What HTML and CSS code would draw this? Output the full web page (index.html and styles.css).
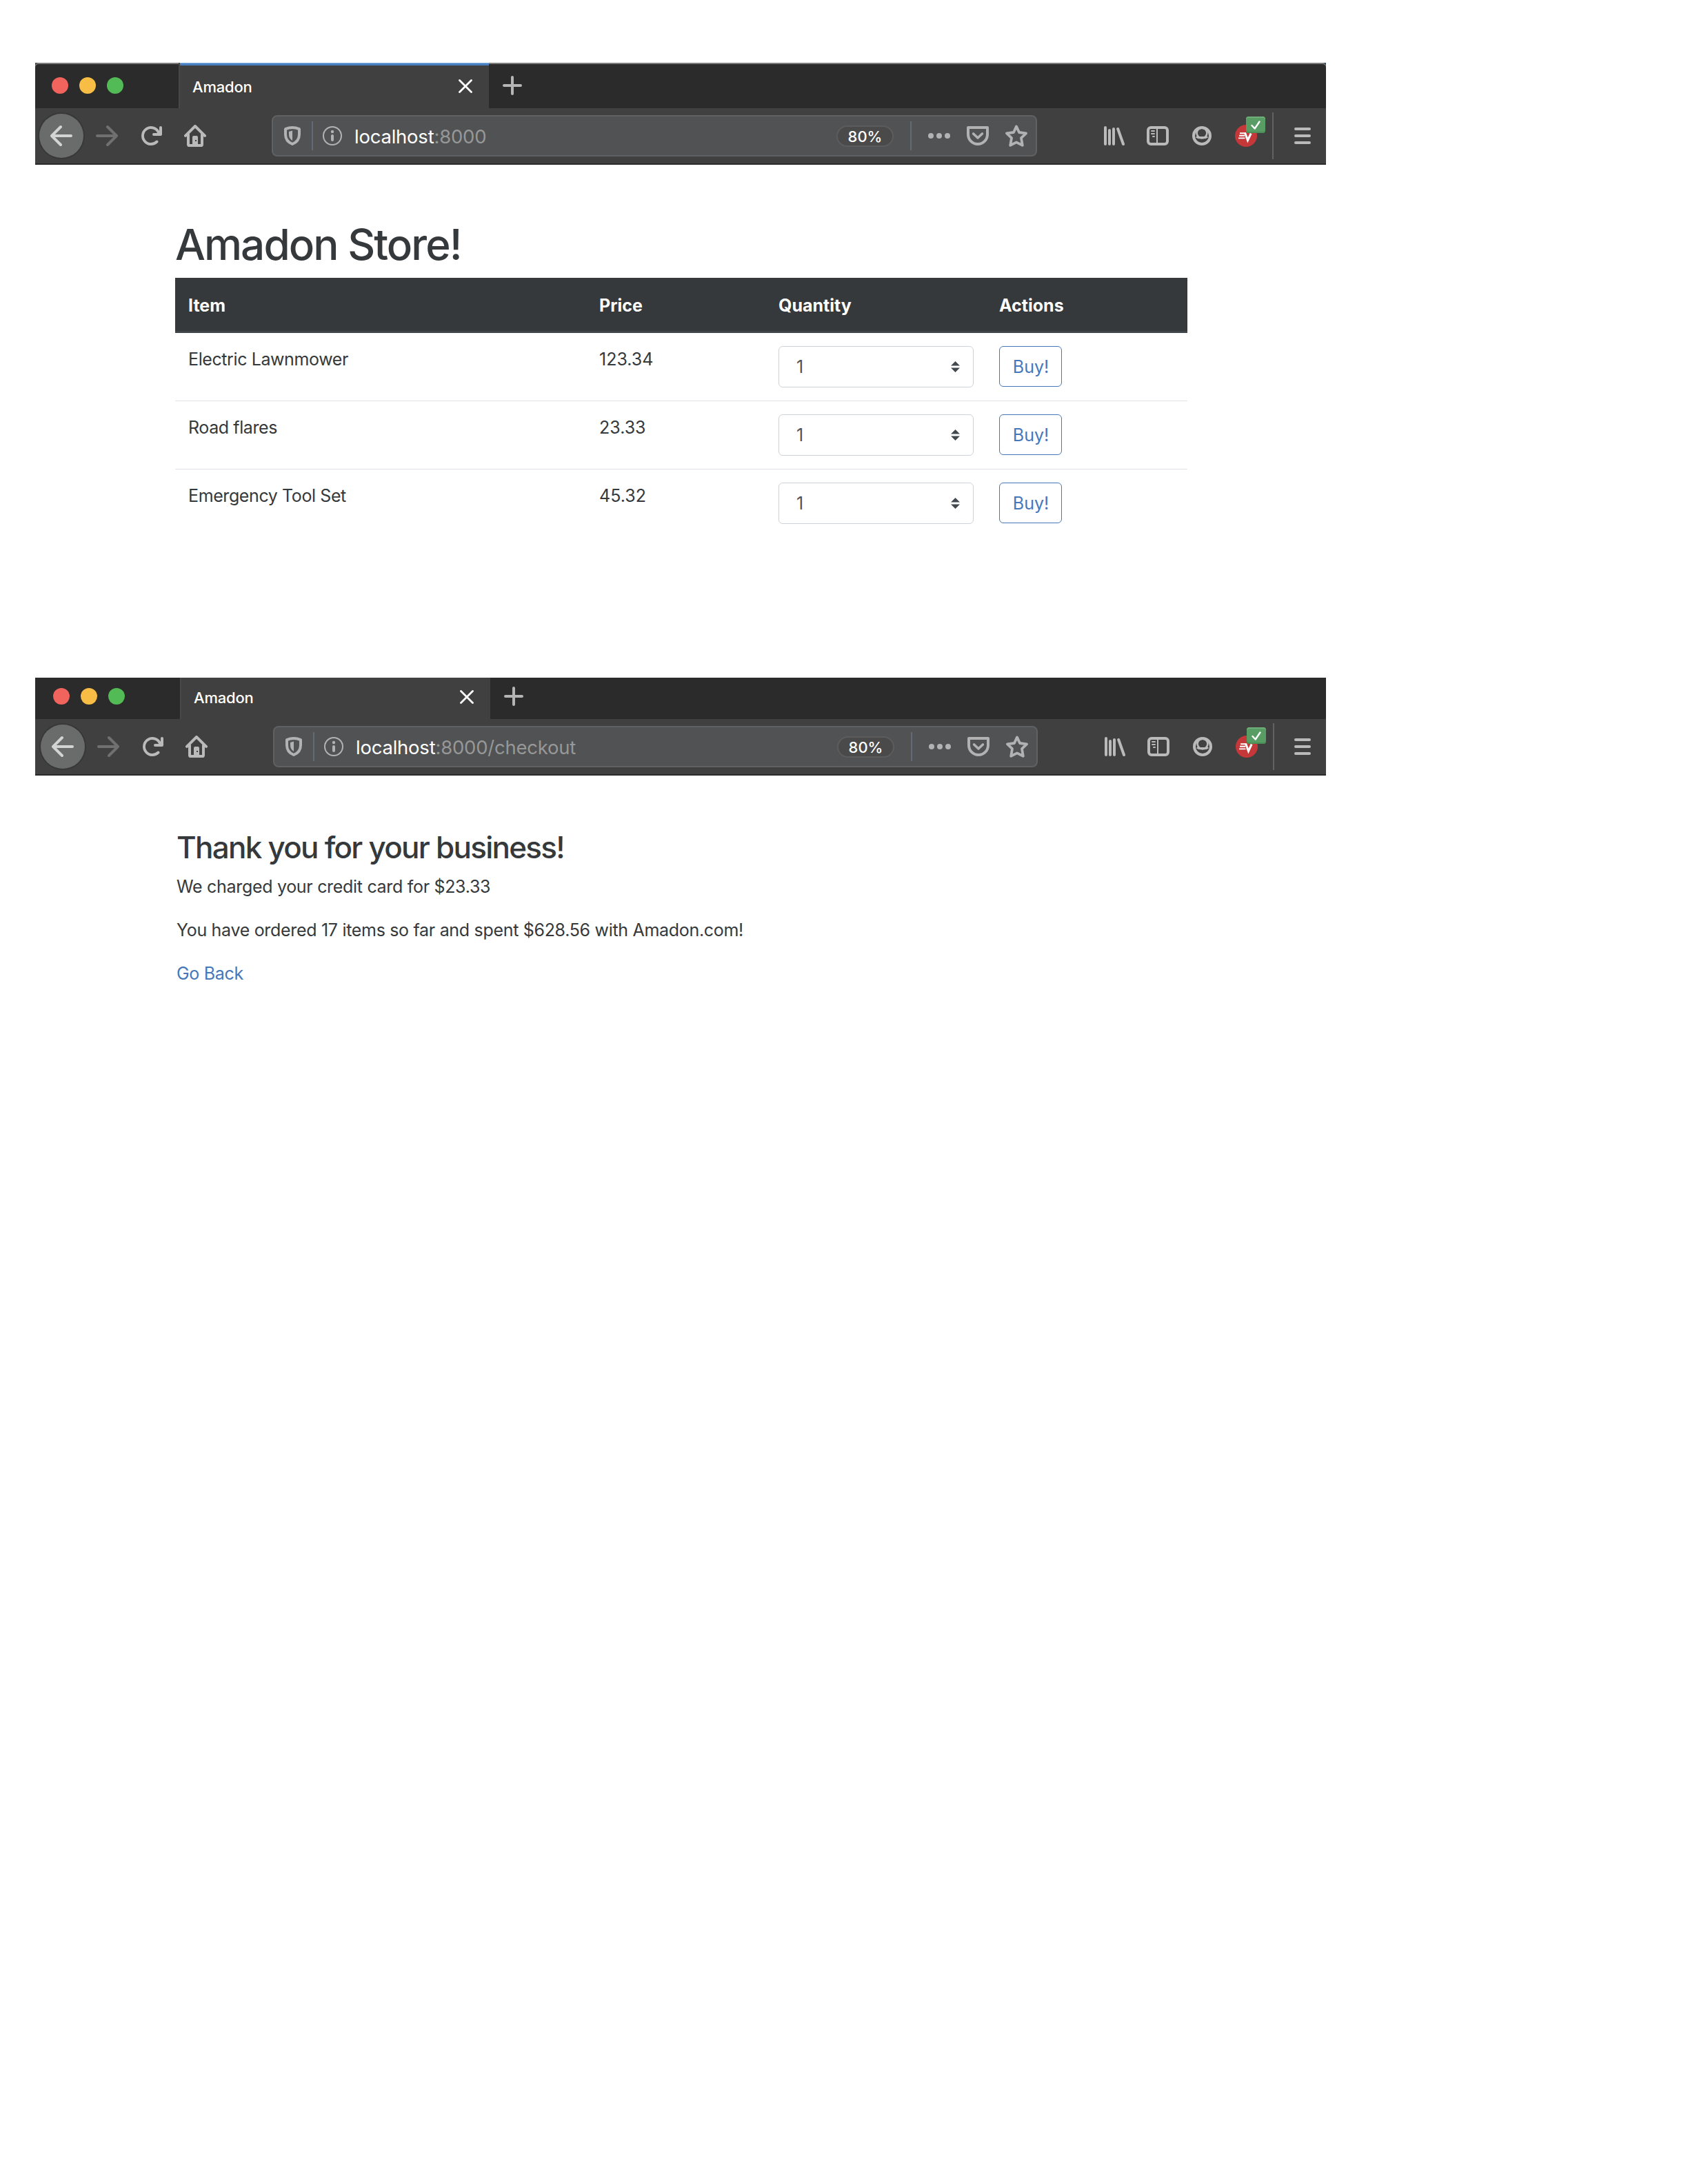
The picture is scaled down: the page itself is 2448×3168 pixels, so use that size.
FILE: index.html
```html
<!DOCTYPE html>
<html lang="en">
<head>
<meta charset="utf-8">
<title>Amadon</title>
<link rel="stylesheet" href="styles.css">
</head>
<body>
<svg width="0" height="0" class="sprite" aria-hidden="true">
  <symbol id="back" viewBox="0 0 16 16"><path d="M15 7H3.414l4.793-4.793a1 1 0 0 0-1.414-1.414l-6.5 6.5a1 1 0 0 0 0 1.414l6.5 6.5a1 1 0 0 0 1.414-1.414L3.414 9H15a1 1 0 0 0 0-2z" fill="currentColor"/></symbol>
  <symbol id="reload" viewBox="0 0 16 16"><path d="M15 1a1 1 0 0 0-1 1v2.418A6.995 6.995 0 1 0 8 15a6.954 6.954 0 0 0 4.95-2.05 1 1 0 0 0-1.414-1.414A5.019 5.019 0 1 1 12.549 6H10a1 1 0 0 0 0 2h5a1 1 0 0 0 1-1V2a1 1 0 0 0-1-1z" fill="currentColor"/></symbol>
  <symbol id="home" viewBox="0 0 16 16"><path d="M1 7.9 8 1l7 6.9M3 7v7.2q0 .8.8.8h8.4q.8 0 .8-.8V7" fill="none" stroke="currentColor" stroke-width="2" stroke-linecap="round" stroke-linejoin="round"/><path fill-rule="evenodd" d="M6 15V9q0-1 1-1h2q1 0 1 1v6zM8 11v1h1v-1z" fill="currentColor"/></symbol>
  <symbol id="shield" viewBox="0 0 16 16"><path d="M3 3.1Q8 1 13 3.1V7q0 5-5 7Q3 12 3 7z" fill="none" stroke="currentColor" stroke-width="2" stroke-linejoin="round"/><path d="M5.5 5 8 4.3v7.2Q5.5 10 5.5 7z" fill="currentColor"/></symbol>
  <symbol id="info" viewBox="0 0 16 16"><circle cx="8" cy="8" r="6.5" fill="none" stroke="currentColor"/><circle cx="8" cy="5" r="1.1" fill="currentColor"/><rect x="7" y="7" width="2" height="5" rx="1" fill="currentColor"/></symbol>
  <symbol id="dots" viewBox="0 0 16 16"><g fill="currentColor"><circle cx="2" cy="8" r="2"/><circle cx="8" cy="8" r="2"/><circle cx="14" cy="8" r="2"/></g></symbol>
  <symbol id="pocket" viewBox="0 0 16 16"><g fill="none" stroke="currentColor" stroke-width="2" stroke-linejoin="round" stroke-linecap="round"><path d="M1 2h14v5a7 7 0 0 1-14 0z"/><path d="m4.8 6.5 3.2 3 3.2-3" stroke-width="1.8"/></g></symbol>
  <symbol id="star" viewBox="0 0 16 16"><path d="m8 1.2 2 4.3 5 .7-3.5 3.4.9 5.3L8 12.7l-4.4 2.2.9-5.3L1 6.2l5-.7z" fill="none" stroke="currentColor" stroke-width="1.9" stroke-linejoin="round"/></symbol>
  <symbol id="library" viewBox="0 0 16 16"><path d="M2 2v12M5 4v10M8 3v11M11.1 3l3.9 11" fill="none" stroke="currentColor" stroke-width="2" stroke-linecap="round"/></symbol>
  <symbol id="sidebar" viewBox="0 0 16 16"><rect x="1" y="2" width="14" height="12" rx="2" fill="none" stroke="currentColor" stroke-width="2"/><path d="M7.5 2v12" stroke="currentColor"/><path d="M3.5 4.5h2M3.5 6.5h2M4.5 8.5h1" stroke="currentColor" stroke-width="1" stroke-linecap="round"/></symbol>
  <symbol id="account" viewBox="0 0 16 16"><circle cx="8" cy="8" r="6" fill="none" stroke="currentColor" stroke-width="2"/><path d="M4 8.600q1.200 1 2 .6h4q.8.4 2-.6" fill="none" stroke="currentColor" stroke-width="1.500"/><circle cx="8" cy="6" r="3.700" fill="none" stroke="currentColor" stroke-width="1.300"/></symbol>
  <symbol id="vpn" viewBox="0 0 32 32"><circle cx="16" cy="16" r="16" fill="#c4383a"/><path d="M7 12.200h8.500M6 15.800h8M5 19.400h9.500" fill="none" stroke="#fff" stroke-width="1.900"/><path d="M14.500 11.500 18.500 22.500 23.200 12.500" fill="none" stroke="#fff" stroke-width="3"/></symbol>
  <symbol id="menu" viewBox="0 0 16 16"><path d="M3 3h10M3 8h10M3 13h10" fill="none" stroke="currentColor" stroke-width="2" stroke-linecap="round"/></symbol>
  <symbol id="close" viewBox="0 0 20 20"><path d="m1.500 1.500 17 17m0-17-17 17" stroke="currentColor" stroke-width="2.800" stroke-linecap="round"/></symbol>
  <symbol id="plus" viewBox="0 0 28 28"><path d="M14 2v24M2 14h24" stroke="currentColor" stroke-width="4" stroke-linecap="round"/></symbol>
  <symbol id="updown" viewBox="0 0 13 16"><path d="M0 6.500 6.500 0 13 6.500zM0 9.500h13L6.500 16z" fill="#42484e"/></symbol>
  <symbol id="check" viewBox="0 0 28 24"><path d="m8.500 13 4.200 4.500L19.500 7.500" fill="none" stroke="#fff" stroke-width="2.400" stroke-linecap="round" stroke-linejoin="round"/></symbol>
</svg>

<section class="window store-window">
  <header class="tabstrip">
    <div class="lights"><i class="red"></i><i class="yellow"></i><i class="green"></i></div>
    <div class="tab"><span class="tab-title">Amadon</span><svg class="close"><use href="#close"/></svg></div>
    <svg class="plus"><use href="#plus"/></svg>
  </header>
  <nav class="toolbar">
    <span class="back"><svg class="icon"><use href="#back"/></svg></span>
    <svg class="icon forward"><use href="#back"/></svg>
    <svg class="icon reload"><use href="#reload"/></svg>
    <svg class="icon home"><use href="#home"/></svg>
    <div class="urlbar">
      <svg class="icon"><use href="#shield"/></svg><i class="rule"></i><svg class="icon"><use href="#info"/></svg>
      <span class="url"><b>localhost</b>:8000</span>
      <span class="zoom">80%</span><i class="rule"></i>
      <svg class="icon dots"><use href="#dots"/></svg><svg class="icon"><use href="#pocket"/></svg><svg class="icon"><use href="#star"/></svg>
    </div>
    <div class="tools">
      <svg class="icon"><use href="#library"/></svg><svg class="icon"><use href="#sidebar"/></svg><svg class="icon"><use href="#account"/></svg>
      <span class="ext"><svg class="icon"><use href="#vpn"/></svg><svg class="badge"><use href="#check"/></svg></span>
    </div>
    <i class="divider"></i>
    <svg class="icon menu"><use href="#menu"/></svg>
  </nav>
</section>

<main class="store">
  <h1>Amadon Store!</h1>
  <table>
    <thead><tr><th class="c-item">Item</th><th class="c-price">Price</th><th class="c-qty">Quantity</th><th>Actions</th></tr></thead>
    <tbody>
      <tr><td class="name">Electric Lawnmower</td><td>123.34</td><td><div class="select">1<svg><use href="#updown"/></svg></div></td><td><button>Buy!</button></td></tr>
      <tr><td class="name">Road flares</td><td>23.33</td><td><div class="select">1<svg><use href="#updown"/></svg></div></td><td><button>Buy!</button></td></tr>
      <tr><td class="name">Emergency Tool Set</td><td>45.32</td><td><div class="select">1<svg><use href="#updown"/></svg></div></td><td><button>Buy!</button></td></tr>
    </tbody>
  </table>
</main>

<section class="window checkout-window">
  <header class="tabstrip">
    <div class="lights"><i class="red"></i><i class="yellow"></i><i class="green"></i></div>
    <div class="tab"><span class="tab-title">Amadon</span><svg class="close"><use href="#close"/></svg></div>
    <svg class="plus"><use href="#plus"/></svg>
  </header>
  <nav class="toolbar">
    <span class="back"><svg class="icon"><use href="#back"/></svg></span>
    <svg class="icon forward"><use href="#back"/></svg>
    <svg class="icon reload"><use href="#reload"/></svg>
    <svg class="icon home"><use href="#home"/></svg>
    <div class="urlbar">
      <svg class="icon"><use href="#shield"/></svg><i class="rule"></i><svg class="icon"><use href="#info"/></svg>
      <span class="url"><b>localhost</b>:8000/checkout</span>
      <span class="zoom">80%</span><i class="rule"></i>
      <svg class="icon dots"><use href="#dots"/></svg><svg class="icon"><use href="#pocket"/></svg><svg class="icon"><use href="#star"/></svg>
    </div>
    <div class="tools">
      <svg class="icon"><use href="#library"/></svg><svg class="icon"><use href="#sidebar"/></svg><svg class="icon"><use href="#account"/></svg>
      <span class="ext"><svg class="icon"><use href="#vpn"/></svg><svg class="badge"><use href="#check"/></svg></span>
    </div>
    <i class="divider"></i>
    <svg class="icon menu"><use href="#menu"/></svg>
  </nav>
</section>

<main class="checkout">
  <h3>Thank you for your business!</h3>
  <p>We charged your credit card for $23.33</p>
  <p>You have ordered 17 items so far and spent $628.56 with Amadon.com!</p>
  <p><a href="#">Go Back</a></p>
</main>
</body>
</html>
```
FILE: styles.css
```css
* { box-sizing: border-box; }
body {
  margin: 0;
  padding: 91px 0 0 51px;
  background: #fff;
  color: #35393c;
  font-family: Inter, "Liberation Sans", sans-serif;
  font-size: 25px;
  line-height: 38px;
}
.sprite { position: absolute; }
svg { display: block; flex: none; }

.window {
  --shift: 0px;
  width: 1872px;
  background: #404040;
  border-bottom: 2px solid #2b2b2b;
}
.checkout-window { --shift: 2px; }

.tabstrip {
  display: flex;
  align-items: center;
  height: 66px;
  background: #2b2b2b;
}
.store-window { background: #34465c; }
.store-window .tabstrip {
  border-radius: 5px 5px 0 0;
  box-shadow: inset 0 2px #7c7c7c;
}
.checkout-window .tabstrip { height: 60px; }
.lights {
  display: flex;
  gap: 16px;
  width: calc(208px + var(--shift));
  padding-left: calc(24px + var(--shift));
}
.lights i { width: 24px; height: 24px; border-radius: 50%; }
.red { background: #f1645d; }
.yellow { background: #f7bd45; }
.green { background: #53bb56; }
.tab {
  display: flex;
  align-items: center;
  justify-content: space-between;
  width: 450px;
  height: 100%;
  padding: 2px 24px 0 18px;
  background: #404040;
  border-left: 2px solid #484848;
}
.store-window .tab { box-shadow: inset 0 1px #85b3e0, inset 0 4px #4a7fc1; }
.tab-title {
  padding-top: 2px;
  color: #fff;
  font-size: 22px;
  font-weight: 500;
  letter-spacing: -0.2px;
}
.close { width: 20px; height: 20px; color: #fff; }
.plus { width: 28px; height: 28px; margin-left: 20px; color: #b5b5b5; }
.checkout-window .lights, .checkout-window .plus { margin-bottom: 6px; }
.checkout-window .tab { padding-bottom: 4px; padding-top: 0; }

.toolbar {
  display: flex;
  align-items: center;
  height: 80px;
  padding-left: calc(6px + var(--shift));
  background: #404040;
  color: #bababa;
}
.icon { width: 32px; height: 32px; }
.back {
  display: flex;
  align-items: center;
  justify-content: center;
  width: 64px;
  height: 64px;
  border-radius: 50%;
  background: #6a6c6b;
  box-shadow: 0 0 0 2px #383838;
  color: #d2d4d3;
}
.forward { margin-left: 18px; color: #707070; transform: scaleX(-1); }
.reload, .home { margin-left: 32px; }
.urlbar {
  display: flex;
  align-items: center;
  width: calc(1110px - var(--shift) / 2);
  height: 60px;
  margin-left: 95px;
  padding: 0 12px;
  border: 2px solid #606163;
  border-radius: 8px;
  background: #505254;
  color: #b2b2b2;
}
.rule { width: 2px; height: 42px; margin: 0 12px; background: #616a76; }
.url {
  flex: 1;
  margin-left: 16px;
  padding-top: 2px;
  color: #979797;
  font-size: 27.5px;
  letter-spacing: -0.23px;
}
.url b { color: #fff; font-weight: 400; }
.zoom {
  width: 83px;
  height: 31px;
  margin-right: 12px;
  border: 2px solid #5c5c5d;
  border-radius: 16px;
  background: #4a4a4a;
  color: #fff;
  font-size: 22px;
  font-weight: 500;
  line-height: 28px;
  text-align: center;
}
.dots { margin: 0 24px 0 12px; }
.dots + .icon { margin-right: 24px; }
.tools { display: flex; gap: 32px; margin-left: 95px; }
.ext { position: relative; }
.badge {
  position: absolute;
  left: 16px;
  top: -12px;
  width: 28px;
  height: 24px;
  border-radius: 4px;
  background: #579d64;
  box-shadow: inset 0 2px #6fae79, inset 0 -2px #4b8f57;
}
.divider { width: 2px; height: 68px; margin-left: 22px; background: #626262; }
.menu { margin-left: calc(26px - var(--shift) / 2); }

.store { width: 1468px; height: 744px; margin-left: 203px; padding-top: 72px; }
h1, h3 { margin: 0; font-weight: 500; }
h1 { height: 92px; font-size: 62px; line-height: 88px; letter-spacing: -1.95px; }
table { width: 100%; border-collapse: separate; border-spacing: 0; table-layout: fixed; }
th {
  height: 80px;
  padding: 3px 0 0 19px;
  border-bottom: 3px solid #40454a;
  background: #35393c;
  color: #fff;
  font-weight: 700;
  text-align: left;
}
.c-item { width: 596px; }
.c-price { width: 260px; }
.c-qty { width: 320px; }
td { height: 99px; padding: 19px 18px 18px 19px; border-bottom: 1px solid #dee1e6; vertical-align: top; }
tr:last-child td { border-bottom: 0; }
.name { letter-spacing: -0.4px; }
.select {
  display: flex;
  align-items: center;
  justify-content: space-between;
  height: 60px;
  padding: 0 19px 0 25px;
  border: 1px solid #ced2d9;
  border-radius: 6px;
  color: #50565c;
}
.select svg { width: 13px; height: 16px; }
button {
  display: block;
  width: 91px;
  height: 59px;
  padding: 0 0 0 1px;
  border: 1px solid #4577bb;
  border-radius: 6px;
  background: #fff;
  color: #4577bb;
  font: inherit;
}

.checkout { margin-left: 205px; padding-top: 75px; }
h3 { height: 67px; font-size: 44px; line-height: 58px; letter-spacing: -1.75px; }
p { margin: 0 0 25px; letter-spacing: -0.31px; }
a { color: #4577bb; text-decoration: none; }
```
